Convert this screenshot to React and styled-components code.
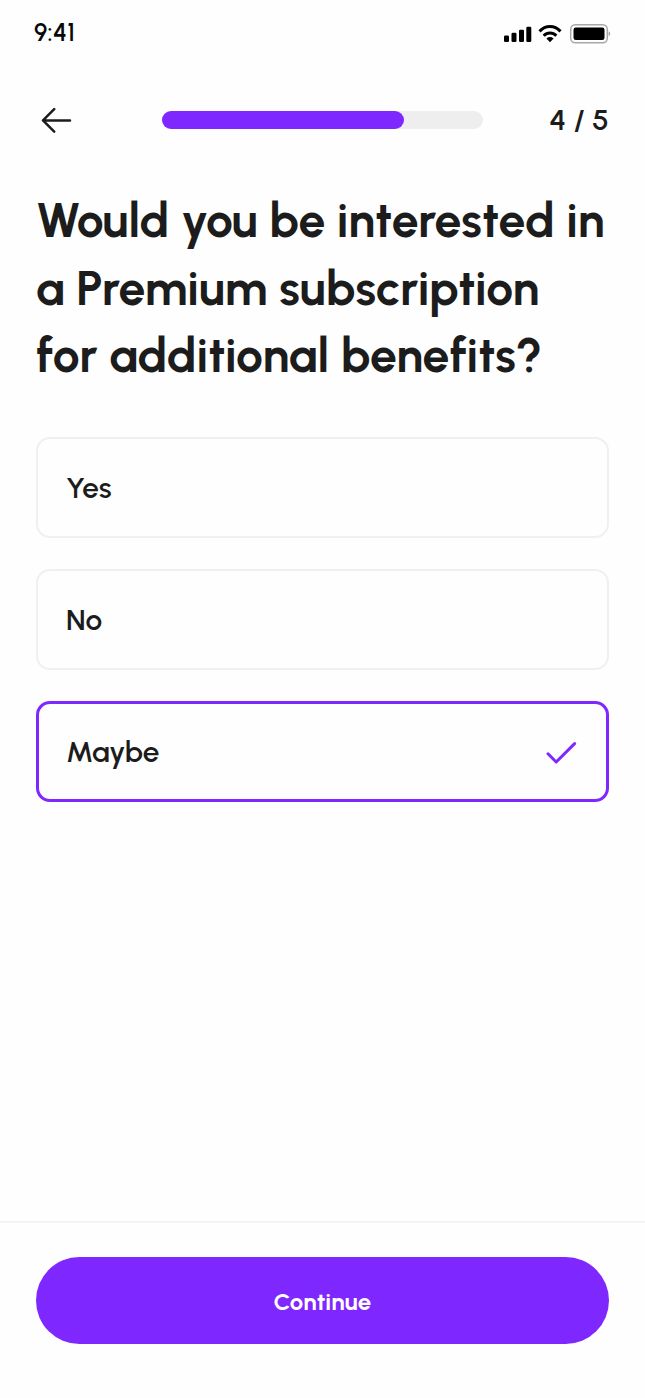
import React from "react";
import styled, { createGlobalStyle } from "styled-components";

const GlobalStyle = createGlobalStyle`
  * { box-sizing: border-box; }
  body {
    margin: 0;
    background: #fefefe;
    color: #1c1c1c;
    font-family: Urbanist, Lato, "Open Sans", sans-serif;
  }
`;

const Screen = styled.div`
  display: flex;
  flex-direction: column;
  width: 645px;
  height: 1398px;
  overflow: hidden;
`;

const StatusBar = styled.div`
  display: flex;
  align-items: center;
  justify-content: space-between;
  height: 66px;
  padding: 0 34px 0 34px;
`;

const Time = styled.span`
  font-size: 24.5px;
  font-weight: 600;
  line-height: 28px;
  letter-spacing: 0.3px;
  color: #080808;
`;

const StatusIcons = styled.svg`
  width: 108px;
  height: 22px;
  margin-top: 2px;
`;

const Header = styled.header`
  display: flex;
  align-items: center;
  height: 108px;
  padding: 0 36px 0 41px;
`;

const BackButton = styled.button`
  display: flex;
  padding: 0;
  border: 0;
  background: none;
  color: #1c1c1c;
`;

const Track = styled.div`
  width: 321px;
  height: 18px;
  margin-left: 90px;
  border-radius: 9px;
  background: #eeeeee;
`;

const Fill = styled.div`
  height: 100%;
  border-radius: 9px;
  background: #7f27ff;
`;

const Step = styled.span`
  margin-left: auto;
  font-size: 29.8px;
  font-weight: 600;
  line-height: 36px;
`;

const Main = styled.main`
  flex: 1;
  padding: 13px 36px 0;
`;

const Title = styled.h1`
  margin: 0;
  font-size: 48px;
  font-weight: 700;
  line-height: 67.5px;
`;

const TitleLine = styled.span`
  display: block;
  white-space: nowrap;
`;

const Options = styled.div`
  display: flex;
  flex-direction: column;
  gap: 31px;
  margin-top: 47.5px;
`;

const Option = styled.div`
  display: flex;
  align-items: center;
  justify-content: space-between;
  height: 101px;
  padding: 0 ${(p) => (p.$selected ? 29 : 28)}px 0 ${(p) => (p.$selected ? 27 : 28)}px;
  border: ${(p) => (p.$selected ? "3px solid #7f27ff" : "2px solid #f0f0f0")};
  border-radius: 14px;
  font-size: 29.8px;
  font-weight: 600;
`;

const Footer = styled.footer`
  height: 177px;
  padding: 34px 36px 0;
  border-top: 2px solid #f5f5f5;
`;

const ContinueButton = styled.button`
  display: block;
  width: 100%;
  height: 87px;
  padding: 1px 0 0;
  border: 0;
  border-radius: 44px;
  background: #7f27ff;
  color: #fff;
  font-family: inherit;
  font-size: 24px;
  font-weight: 700;
  letter-spacing: 0.2px;
`;

const title = [
  "Would you be interested in",
  "a Premium subscription",
  "for additional benefits?",
];

const options = [
  { label: "Yes" },
  { label: "No" },
  { label: "Maybe", selected: true },
];

const DeviceStatus = () => (
  <StatusIcons viewBox="0 0 108 22" fill="#000">
    <rect x="1" y="12.5" width="5" height="6.5" rx="1.3" />
    <rect x="8.5" y="9.8" width="5" height="9.2" rx="1.3" />
    <rect x="16" y="6.8" width="5" height="12.2" rx="1.3" />
    <rect x="23.3" y="3.7" width="5" height="15.3" rx="1.3" />
    <g fill="none" stroke="#000" strokeWidth="3">
      <path d="M36.5 8.4C42.6 2 51.4 2 57.5 8.4" />
      <path d="M40.7 12.8C44.3 9.1 49.7 9.1 53.3 12.8" />
    </g>
    <path d="M43.4 15.4q3.6-2.8 7.2 0L47 19.2z" />
    <rect x="67.7" y="1.7" width="36.6" height="18" rx="4.5" fill="none" stroke="#a8a8a8" strokeWidth="1.5" />
    <rect x="70.5" y="4.5" width="31" height="12.5" rx="2.3" />
    <path d="M105.7 8.2q3 2.5 0 5z" fill="#999" />
  </StatusIcons>
);

const BackArrow = () => (
  <svg width="31" height="26" viewBox="0 0 31 26" fill="none" stroke="currentColor" strokeWidth="2.5" strokeLinecap="round" strokeLinejoin="round">
    <path d="M29 13.4H2M13.2 2.2L2 13.4l11.2 11.2" />
  </svg>
);

const Check = () => (
  <svg width="32" height="24" viewBox="0 0 32 24" fill="none" stroke="#7f27ff" strokeWidth="3" strokeLinecap="round" strokeLinejoin="round">
    <path d="M3 13.8l8.2 8.2L29.6 3.6" />
  </svg>
);

export default function App() {
  return (
    <>
      <GlobalStyle />
      <Screen>
        <StatusBar>
          <Time>9:41</Time>
          <DeviceStatus />
        </StatusBar>
        <Header>
          <BackButton aria-label="Back">
            <BackArrow />
          </BackButton>
          <Track>
            <Fill style={{ width: "75.4%" }} />
          </Track>
          <Step>4 / 5</Step>
        </Header>
        <Main>
          <Title>
            {title.map((line) => (
              <TitleLine key={line}>{line}</TitleLine>
            ))}
          </Title>
          <Options>
            {options.map((o) => (
              <Option key={o.label} $selected={o.selected}>
                {o.label}
                {o.selected && <Check />}
              </Option>
            ))}
          </Options>
        </Main>
        <Footer>
          <ContinueButton>Continue</ContinueButton>
        </Footer>
      </Screen>
    </>
  );
}
